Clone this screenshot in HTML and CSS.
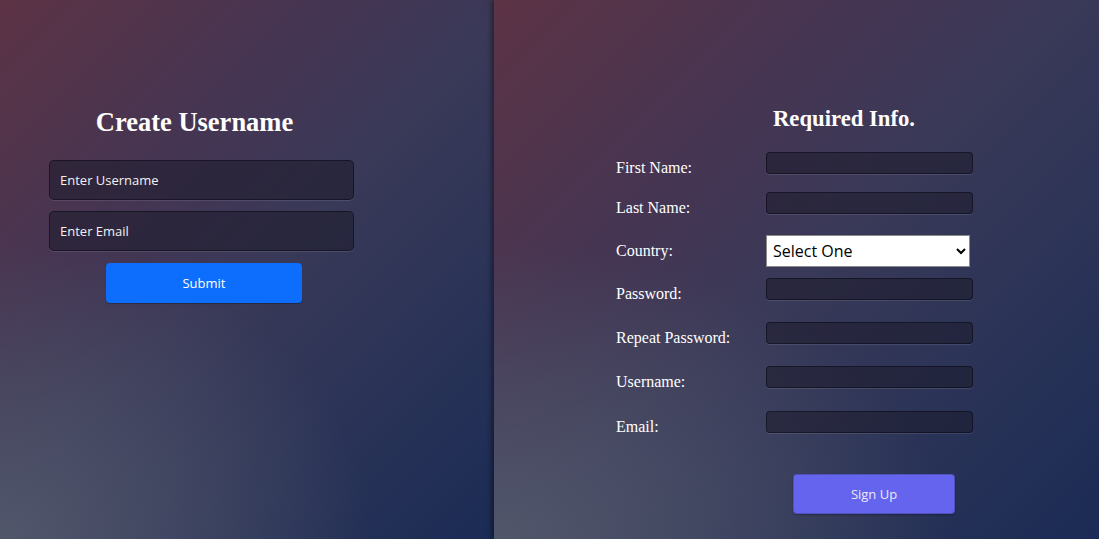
FILE: index.html
```html
<!DOCTYPE html>
<html lang="en">
<head>
<meta charset="utf-8">
<title>Sign Up</title>
<link rel="stylesheet" href="styles.css">
</head>
<body>
<main class="page">
  <section class="panel panel-left">
    <form class="user-form">
      <h1 class="user-title">Create Username</h1>
      <input class="field-lg" type="text" placeholder="Enter Username">
      <input class="field-lg" type="email" placeholder="Enter Email">
      <button class="btn btn-submit" type="button">Submit</button>
    </form>
  </section>
  <section class="panel panel-right">
    <form class="info-form">
      <h2 class="info-title">Required Info.</h2>
      <div class="info-grid">
        <label class="lbl">First Name:</label><input class="field-sm" type="text">
        <label class="lbl">Last Name:</label><input class="field-sm" type="text">
        <label class="lbl">Country:</label>
        <select class="select">
          <option>Select One</option>
        </select>
        <label class="lbl">Password:</label><input class="field-sm" type="password">
        <label class="lbl">Repeat Password:</label><input class="field-sm" type="password">
        <label class="lbl">Username:</label><input class="field-sm" type="text">
        <label class="lbl">Email:</label><input class="field-sm" type="email">
      </div>
      <button class="btn btn-signup" type="button">Sign Up</button>
    </form>
  </section>
</main>
</body>
</html>
```
FILE: styles.css
```css
html, body {
  margin: 0;
  padding: 0;
  height: 100%;
}
body {
  font-family: "Liberation Serif", "Times New Roman", serif;
  color: #fff;
  overflow: hidden;
}
.page {
  display: flex;
  height: 539px;
}
.panel {
  height: 100%;
  box-sizing: border-box;
  background:
    radial-gradient(ellipse 75% 55% at 0% 100%, rgba(82, 88, 108, 0.95), rgba(82, 88, 108, 0) 100%),
    linear-gradient(135deg, #5d3345 0%, #463552 30%, #3a3958 50%, #2c3457 72%, #1b2b55 100%);
}
.panel-left {
  width: 494px;
  flex: none;
  padding-top: 106px;
  padding-left: 49px;
}
.panel-right {
  flex: 1;
  padding-top: 105px;
  padding-left: 122px;
  box-shadow: -3px 0 4px rgba(0, 0, 0, 0.35);
  position: relative;
}

/* left form */
.user-form {
  width: 305px;
  display: flex;
  flex-direction: column;
}
.user-title {
  margin: 0 14px 22px 0;
  font-size: 26.5px;
  line-height: 32px;
  font-weight: bold;
  text-align: center;
}
.field-lg {
  box-sizing: border-box;
  width: 305px;
  height: 40px;
  margin: 0 0 11px 0;
  padding: 0 10px;
  border: 1px solid rgba(10, 10, 20, 0.55);
  border-radius: 5px;
  background: rgba(28, 26, 42, 0.55);
  box-shadow: 0 1px 0 rgba(255, 255, 255, 0.1);
  font-family: "Open Sans", sans-serif;
  font-size: 13px;
  color: #fff;
  outline: none;
}
.field-lg::placeholder {
  color: #f2f2f2;
  opacity: 1;
}
.btn {
  box-sizing: border-box;
  height: 40px;
  border: none;
  border-radius: 4px;
  font-family: "Open Sans", sans-serif;
  font-size: 13px;
  color: #fff;
  cursor: pointer;
}
.btn-submit {
  margin: 1px 0 0 57px;
  width: 196px;
  background: #0d6efd;
  box-shadow: 0 1px 1px rgba(0, 0, 0, 0.3);
}

/* right form */
.info-form {
  display: flex;
  flex-direction: column;
}
.info-title {
  margin: 0 0 20px 0;
  width: 456px;
  font-size: 22.7px;
  line-height: 27px;
  font-weight: bold;
  text-align: center;
}
.info-grid {
  display: grid;
  grid-template-columns: 150px 207px;
  grid-template-rows: 40px 43px 43px 44px 44px 45px 63px;
  align-items: start;
}
.lbl {
  padding-top: 7px;
  font-size: 16px;
  line-height: 18px;
}
.field-sm {
  box-sizing: border-box;
  width: 207px;
  height: 22px;
  margin: 0;
  border: 1px solid rgba(10, 10, 20, 0.55);
  border-radius: 4px;
  background: rgba(28, 26, 42, 0.55);
  box-shadow: 0 1px 0 rgba(255, 255, 255, 0.1);
  outline: none;
  color: #fff;
}
.select {
  box-sizing: border-box;
  width: 204px;
  height: 32px;
  margin: 0;
  border: 1px solid #8a8a8a;
  border-radius: 0;
  background: #fff;
  color: #000;
  font-family: "Open Sans", sans-serif;
  font-size: 16px;
  padding: 0 2px;
}
.btn-signup {
  margin-left: 177px;
  width: 162px;
  background: #6564ee;
  color: #eceaf8;
  border: 1px solid rgba(70, 70, 160, 0.6);
  box-shadow: 0 1px 2px rgba(0, 0, 0, 0.3);
}
```
